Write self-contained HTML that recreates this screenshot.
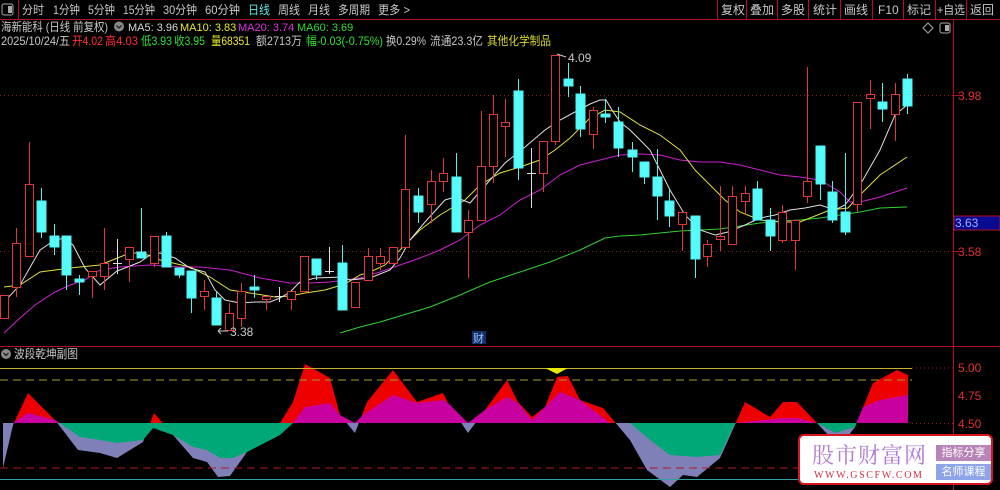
<!DOCTYPE html>
<html><head><meta charset="utf-8"><style>
html,body{margin:0;padding:0;background:#000;}
body{width:1000px;height:490px;overflow:hidden;position:relative;font-family:"Liberation Sans","Noto Sans CJK SC",sans-serif;}
svg{position:absolute;left:0;top:0;}
.wm{position:absolute;left:798px;top:434px;width:195px;height:51px;background:#fff;border:2px solid #d8141e;border-radius:6px;box-sizing:border-box;}
.wm .t{position:absolute;left:12px;top:3px;font-family:"Liberation Serif","Noto Serif CJK SC",serif;font-size:22px;color:#b07ad0;letter-spacing:1px;}
.wm .u{position:absolute;left:14px;top:34px;font-family:"Liberation Serif",serif;font-size:10px;color:#d03040;letter-spacing:1.6px;}
.wm .b{position:absolute;left:136px;width:55px;height:16px;color:#fff;font-size:11px;line-height:16px;text-align:center;font-family:"Liberation Sans","Noto Sans CJK SC",sans-serif;}
</style></head><body>
<svg width="1000" height="490" viewBox="0 0 1000 490" font-family="Liberation Sans, Noto Sans CJK SC, sans-serif" font-size="12">
<line x1="0" y1="19.5" x2="1000" y2="19.5" stroke="#b01020"/>
<line x1="953.5" y1="19" x2="953.5" y2="490" stroke="#b01020"/>
<line x1="0" y1="346.5" x2="1000" y2="346.5" stroke="#b01020"/>
<rect x="2" y="4" width="11" height="11" rx="2" fill="none" stroke="#aaa"/><rect x="8" y="6" width="4" height="7" fill="#aaa"/>
<line x1="18.5" y1="0" x2="18.5" y2="19" stroke="#b01020"/>
<g fill="#c8c8c8">
<text x="22" y="14" textLength="22" lengthAdjust="spacingAndGlyphs">分时</text><text x="53" y="14" textLength="27" lengthAdjust="spacingAndGlyphs">1分钟</text><text x="88" y="14" textLength="27" lengthAdjust="spacingAndGlyphs">5分钟</text><text x="123" y="14" textLength="32" lengthAdjust="spacingAndGlyphs">15分钟</text><text x="163" y="14" textLength="34" lengthAdjust="spacingAndGlyphs">30分钟</text><text x="205" y="14" textLength="35" lengthAdjust="spacingAndGlyphs">60分钟</text>
<text x="248" y="14" fill="#5fe8e8" textLength="22" lengthAdjust="spacingAndGlyphs">日线</text><text x="278" y="14" textLength="22" lengthAdjust="spacingAndGlyphs">周线</text><text x="308" y="14" textLength="22" lengthAdjust="spacingAndGlyphs">月线</text><text x="338" y="14" textLength="32" lengthAdjust="spacingAndGlyphs">多周期</text><text x="378" y="14" textLength="32" lengthAdjust="spacingAndGlyphs">更多 &gt;</text>
</g>
<g stroke="#b01020"><line x1="717.5" y1="0" x2="717.5" y2="19"/><line x1="746.5" y1="0" x2="746.5" y2="19"/><line x1="777.5" y1="0" x2="777.5" y2="19"/><line x1="808.5" y1="0" x2="808.5" y2="19"/><line x1="840.5" y1="0" x2="840.5" y2="19"/><line x1="872.5" y1="0" x2="872.5" y2="19"/><line x1="903.5" y1="0" x2="903.5" y2="19"/><line x1="935.5" y1="0" x2="935.5" y2="19"/><line x1="966.5" y1="0" x2="966.5" y2="19"/></g>
<g fill="#c8c8c8"><text x="721" y="14">复权</text><text x="750" y="14">叠加</text><text x="781" y="14">多股</text><text x="813" y="14">统计</text><text x="844" y="14">画线</text><text x="878" y="14">F10</text><text x="907" y="14">标记</text><text x="937" y="14" textLength="28" lengthAdjust="spacingAndGlyphs">+自选</text><text x="970" y="14">返回</text></g>
<text x="1" y="31" fill="#c8c8c8" textLength="107" lengthAdjust="spacingAndGlyphs">海新能科 (日线 前复权)</text>
<circle cx="119" cy="26.5" r="5" fill="#888"/><path d="M116.5 25.5 L119 28 L121.5 25.5" stroke="#222" fill="none" stroke-width="1.3"/>
<g font-size="11">
<text x="128" y="31" fill="#d8d8d8">MA5: 3.96</text><text x="180" y="31" fill="#e8e830">MA10: 3.83</text><text x="238" y="31" fill="#e030e0">MA20: 3.74</text><text x="297" y="31" fill="#30d830">MA60: 3.69</text>
</g>
<text x="1" y="45" fill="#c8c8c8" textLength="69" lengthAdjust="spacingAndGlyphs">2025/10/24/五</text>
<text x="72" y="45" fill="#ff3030" textLength="31" lengthAdjust="spacingAndGlyphs">开4.02</text>
<text x="105" y="45" fill="#ff3030" textLength="33" lengthAdjust="spacingAndGlyphs">高4.03</text>
<text x="141" y="45" fill="#30e030" textLength="31" lengthAdjust="spacingAndGlyphs">低3.93</text>
<text x="174" y="45" fill="#30e030" textLength="31" lengthAdjust="spacingAndGlyphs">收3.95</text>
<text x="211" y="45" fill="#e8e830" textLength="39" lengthAdjust="spacingAndGlyphs">量68351</text>
<text x="256" y="45" fill="#c8c8c8" textLength="46" lengthAdjust="spacingAndGlyphs">额2713万</text>
<text x="306" y="45" fill="#30e030" textLength="77" lengthAdjust="spacingAndGlyphs">幅-0.03(-0.75%)</text>
<text x="386" y="45" fill="#c8c8c8" textLength="40" lengthAdjust="spacingAndGlyphs">换0.29%</text>
<text x="430" y="45" fill="#c8c8c8" textLength="53" lengthAdjust="spacingAndGlyphs">流通23.3亿</text>
<text x="487" y="45" fill="#d8d830" textLength="64" lengthAdjust="spacingAndGlyphs">其他化学制品</text>
<path d="M928 23 L933 28 L928 33 L923 28 Z" fill="none" stroke="#aaa"/>
<rect x="940" y="23" width="10" height="10" rx="2" fill="none" stroke="#aaa"/><rect x="945" y="25" width="4" height="6" fill="#aaa"/>
<line x1="0" y1="95.5" x2="953" y2="95.5" stroke="#902020" stroke-dasharray="1,3"/>
<line x1="0" y1="251.5" x2="953" y2="251.5" stroke="#902020" stroke-dasharray="1,3"/>
<line x1="953" y1="95.5" x2="962" y2="95.5" stroke="#b01020"/><line x1="953" y1="251.5" x2="962" y2="251.5" stroke="#b01020"/>
<text x="958" y="100" fill="#e03030">3.98</text><text x="958" y="256" fill="#e03030">3.58</text>
<rect x="954" y="216" width="46" height="14" fill="#0a0a90" stroke="#b01020"/><text x="955" y="227" fill="#9ab0ff">3.63</text>
<g fill="none" stroke-width="1">
<polyline stroke="#30d030" points="340,333 360,327 380,322 400,316 430,307 460,295 490,282 520,272 550,262 580,250 605,238 620,236 640,235 660,233 680,231 700,230 720,229 740,226 760,223 780,221 800,220 820,218 840,215 860,212 880,208 907,207"/>
<polyline stroke="#d020d0" points="4,333 20,318 35,305 55,292 70,285 85,280 100,270 120,267 150,265 180,267 200,267 230,270 260,278 290,283 310,283 330,282 345,280 360,278 380,272 400,265 420,258 440,250 460,240 480,225 500,215 520,200 540,190 560,175 580,165 600,160 620,155 640,154 660,155 680,160 700,162 720,162 740,165 760,170 780,175 800,177 820,180 840,192 850,202 860,202 880,197 907,188"/>
<polyline stroke="#e0e040" points="4,287 20,285 40,272 70,268 100,265 125,255 140,252 160,260 190,267 210,277 230,290 250,293 275,297 290,296 305,293 325,290 345,284 360,275 370,272 385,265 400,250 420,230 440,215 465,200 480,185 500,173 520,167 540,160 555,150 570,138 590,118 605,110 620,112 640,125 660,135 680,150 695,170 710,185 725,200 740,212 760,220 780,222 800,222 815,216 830,210 848,208 860,195 880,175 907,157"/>
<polyline stroke="#e0e0e0" points="4,302 20,285 40,250 55,240 65,238 73,245 85,268 100,285 117,271 125,268 140,262 150,255 160,253 175,258 190,268 205,272 215,290 225,300 240,303 255,302 270,302 280,298 290,292 300,282 315,278 342,277 350,280 370,278 390,270 400,258 410,240 425,222 445,200 455,197 470,203 490,180 505,163 525,147 545,130 560,120 575,112 590,104 600,100 606,100 612,110 620,122 630,130 640,140 650,150 660,170 670,190 685,215 700,230 715,235 728,232 745,225 760,218 775,215 790,210 805,208 820,205 835,210 845,205 860,185 880,150 895,115 907,105"/>
</g>
<g stroke-width="1">
<g stroke="#e03838" fill="#000">
<line x1="4.5" y1="295" x2="4.5" y2="318"/><rect x="0.5" y="295.5" width="8" height="23"/>
<line x1="16.5" y1="228" x2="16.5" y2="297"/><rect x="12.5" y="243.5" width="8" height="44"/>
<line x1="29.5" y1="142" x2="29.5" y2="256"/><rect x="25.5" y="184.5" width="8" height="72"/>
<line x1="92.5" y1="271" x2="92.5" y2="298"/><rect x="88.5" y="271.5" width="8" height="5"/>
<line x1="104.5" y1="228" x2="104.5" y2="290"/><rect x="100.5" y="263.5" width="8" height="13"/>
<line x1="129.5" y1="247" x2="129.5" y2="282"/><rect x="125.5" y="247.5" width="8" height="12"/>
<line x1="154.5" y1="236" x2="154.5" y2="267"/><rect x="150.5" y="236.5" width="8" height="27"/>
<line x1="204.5" y1="280" x2="204.5" y2="310"/><rect x="200.5" y="291.5" width="8" height="5"/>
<line x1="229.5" y1="303" x2="229.5" y2="330"/><rect x="225.5" y="313.5" width="8" height="17"/>
<line x1="241.5" y1="283" x2="241.5" y2="327"/><rect x="237.5" y="291.5" width="8" height="27"/>
<line x1="266.5" y1="296" x2="266.5" y2="310"/><rect x="262.5" y="296.5" width="8" height="3"/>
<line x1="291.5" y1="291" x2="291.5" y2="310"/><rect x="287.5" y="291.5" width="8" height="8"/>
<rect x="300.5" y="256.5" width="8" height="35"/>
<rect x="351.5" y="282.5" width="8" height="25"/>
<line x1="368.5" y1="248" x2="368.5" y2="280"/><rect x="364.5" y="256.5" width="8" height="24"/>
<line x1="380.5" y1="248" x2="380.5" y2="270"/><rect x="376.5" y="256.5" width="8" height="7"/>
<rect x="389.5" y="247.5" width="8" height="16"/>
<line x1="405.5" y1="135" x2="405.5" y2="247"/><rect x="401.5" y="189.5" width="8" height="58"/>
<line x1="431.5" y1="170" x2="431.5" y2="223"/><rect x="427.5" y="181.5" width="8" height="23"/>
<line x1="443.5" y1="158" x2="443.5" y2="192"/><rect x="439.5" y="173.5" width="8" height="8"/>
<line x1="468.5" y1="210" x2="468.5" y2="278"/><rect x="464.5" y="220.5" width="8" height="12"/>
<line x1="481.5" y1="111" x2="481.5" y2="220"/><rect x="477.5" y="166.5" width="8" height="54"/>
<line x1="493.5" y1="95" x2="493.5" y2="183"/><rect x="489.5" y="114.5" width="8" height="52"/>
<line x1="505.5" y1="99" x2="505.5" y2="157"/><rect x="501.5" y="122.5" width="8" height="4"/>
<line x1="543.5" y1="141" x2="543.5" y2="192"/><rect x="539.5" y="141.5" width="8" height="32"/>
<line x1="555.5" y1="55" x2="555.5" y2="145"/><rect x="551.5" y="55.5" width="8" height="86"/>
<line x1="593.5" y1="107" x2="593.5" y2="149"/><rect x="589.5" y="110.5" width="8" height="24"/>
<line x1="682.5" y1="212" x2="682.5" y2="251"/><rect x="678.5" y="212.5" width="8" height="12"/>
<line x1="707.5" y1="240" x2="707.5" y2="267"/><rect x="703.5" y="244.5" width="8" height="12"/>
<line x1="720.5" y1="186" x2="720.5" y2="251"/><rect x="716.5" y="236.5" width="8" height="3"/>
<line x1="732.5" y1="186" x2="732.5" y2="244"/><rect x="728.5" y="196.5" width="8" height="48"/>
<line x1="745.5" y1="186" x2="745.5" y2="215"/><rect x="741.5" y="193.5" width="8" height="8"/>
<line x1="782.5" y1="205" x2="782.5" y2="243"/><rect x="778.5" y="212.5" width="8" height="28"/>
<line x1="795.5" y1="220" x2="795.5" y2="270"/><rect x="791.5" y="220.5" width="8" height="20"/>
<line x1="807.5" y1="67" x2="807.5" y2="203"/><rect x="803.5" y="181.5" width="8" height="15"/>
<line x1="857.5" y1="102" x2="857.5" y2="212"/><rect x="853.5" y="102.5" width="8" height="102"/>
<line x1="870.5" y1="80" x2="870.5" y2="129"/><rect x="866.5" y="94.5" width="8" height="4"/>
<line x1="895.5" y1="83" x2="895.5" y2="141"/><rect x="891.5" y="94.5" width="8" height="20"/>
</g>
<g stroke="#54f0f0" fill="#54fcfc">
<line x1="41.5" y1="188" x2="41.5" y2="238"/><rect x="37" y="201" width="9" height="31"/>
<line x1="54.5" y1="224" x2="54.5" y2="255"/><rect x="50" y="236" width="9" height="11"/>
<line x1="66.5" y1="236" x2="66.5" y2="290"/><rect x="62" y="236" width="9" height="39"/>
<line x1="79.5" y1="275" x2="79.5" y2="295"/><rect x="75" y="279" width="9" height="3"/>
<line x1="141.5" y1="208" x2="141.5" y2="258"/><rect x="137" y="252" width="9" height="6"/>
<line x1="166.5" y1="232" x2="166.5" y2="267"/><rect x="162" y="236" width="9" height="31"/>
<line x1="179.5" y1="268" x2="179.5" y2="278"/><rect x="175" y="268" width="9" height="7"/>
<line x1="191.5" y1="271" x2="191.5" y2="313"/><rect x="187" y="271" width="9" height="27"/>
<line x1="216.5" y1="292" x2="216.5" y2="325"/><rect x="212" y="298" width="9" height="27"/>
<line x1="254.5" y1="275" x2="254.5" y2="298"/><rect x="250" y="287" width="9" height="3"/>
<line x1="316.5" y1="259" x2="316.5" y2="280"/><rect x="312" y="259" width="9" height="16"/>
<line x1="342.5" y1="245" x2="342.5" y2="310"/><rect x="338" y="263" width="9" height="47"/>
<line x1="418.5" y1="188" x2="418.5" y2="223"/><rect x="414" y="196" width="9" height="16"/>
<line x1="456.5" y1="153" x2="456.5" y2="232"/><rect x="452" y="177" width="9" height="55"/>
<line x1="518.5" y1="79" x2="518.5" y2="180"/><rect x="514" y="91" width="9" height="77"/>
<line x1="568.5" y1="63" x2="568.5" y2="97"/><rect x="564" y="79" width="9" height="7"/>
<line x1="580.5" y1="86" x2="580.5" y2="137"/><rect x="576" y="94" width="9" height="35"/>
<line x1="605.5" y1="99" x2="605.5" y2="123"/><rect x="601" y="114" width="9" height="3"/>
<line x1="618.5" y1="107" x2="618.5" y2="157"/><rect x="614" y="122" width="9" height="26"/>
<line x1="632.5" y1="142" x2="632.5" y2="172"/><rect x="628" y="150" width="9" height="7"/>
<line x1="644.5" y1="162" x2="644.5" y2="184"/><rect x="640" y="162" width="9" height="15"/>
<line x1="657.5" y1="149" x2="657.5" y2="220"/><rect x="653" y="177" width="9" height="19"/>
<line x1="669.5" y1="189" x2="669.5" y2="227"/><rect x="665" y="201" width="9" height="15"/>
<line x1="695.5" y1="216" x2="695.5" y2="278"/><rect x="691" y="216" width="9" height="43"/>
<line x1="757.5" y1="181" x2="757.5" y2="220"/><rect x="753" y="189" width="9" height="31"/>
<line x1="770.5" y1="208" x2="770.5" y2="251"/><rect x="766" y="220" width="9" height="16"/>
<line x1="820.5" y1="146" x2="820.5" y2="200"/><rect x="816" y="146" width="9" height="38"/>
<line x1="832.5" y1="181" x2="832.5" y2="223"/><rect x="828" y="192" width="9" height="28"/>
<line x1="845.5" y1="153" x2="845.5" y2="235"/><rect x="841" y="212" width="9" height="20"/>
<line x1="882.5" y1="83" x2="882.5" y2="122"/><rect x="878" y="102" width="9" height="7"/>
<line x1="907.5" y1="74" x2="907.5" y2="114"/><rect x="903" y="79" width="9" height="27"/>
</g>
<g stroke="#e0e0e0">
<line x1="117.5" y1="239" x2="117.5" y2="274"/><line x1="113" y1="263.5" x2="122" y2="263.5"/>
<line x1="279.5" y1="287" x2="279.5" y2="302"/><line x1="275" y1="296.5" x2="284" y2="296.5"/>
<line x1="329.5" y1="247" x2="329.5" y2="274"/><line x1="325" y1="271.5" x2="334" y2="271.5"/>
<line x1="531.5" y1="148" x2="531.5" y2="208"/><line x1="527" y1="173.5" x2="536" y2="173.5"/>
</g>
</g>
<text x="568" y="62" fill="#c8c8c8">4.09</text><path d="M557 54 L566 57" stroke="#c8c8c8"/>
<text x="230" y="336" fill="#c8c8c8">3.38</text><path d="M218 331 L228 331 M218 331 L221 328 M218 331 L221 334" stroke="#c8c8c8" fill="none"/>
<rect x="472" y="331" width="14" height="13" fill="#10306a"/><text x="473" y="342" fill="#a0c0ff" font-size="11">财</text>
<circle cx="6" cy="354" r="5" fill="#888"/><path d="M3.5 353 L6 355.5 L8.5 353" stroke="#222" fill="none" stroke-width="1.3"/>
<text x="14" y="358" fill="#c8c8c8" textLength="64" lengthAdjust="spacingAndGlyphs">波段乾坤副图</text>
<defs>
<clipPath id="up"><rect x="0" y="346" width="953" height="77"/></clipPath>
<clipPath id="dn"><rect x="0" y="423" width="953" height="67"/></clipPath>
</defs>
<g clip-path="url(#up)"><path fill="#ee0000" d="M3,423 L3,468 13,425 28,393 55,420 78,450 100,453 117,458 143,442 154,413 173,435 193,458 207,462 218,477 230,476 247,452 257,440 267,437 280,423 293,402 305,364 330,378 340,415 355,433 367,402 393,370 417,402 443,393 448,403 468,433 485,410 507,380 518,402 532,417 545,407 557,377 568,376 580,400 603,408 630,440 647,470 670,487 683,475 697,477 720,458 725,447 745,402 770,417 783,402 797,402 817,423 830,437 845,440 855,427 873,383 897,370 908,375 908,423 Z"/></g>
<g clip-path="url(#dn)"><path fill="#8080b8" d="M3,423 L3,468 13,425 28,393 55,420 78,450 100,453 117,458 143,442 154,413 173,435 193,458 207,462 218,477 230,476 247,452 257,440 267,437 280,423 293,402 305,364 330,378 340,415 355,433 367,402 393,370 417,402 443,393 448,403 468,433 485,410 507,380 518,402 532,417 545,407 557,377 568,376 580,400 603,408 630,440 647,470 670,487 683,475 697,477 720,458 725,447 745,402 770,417 783,402 797,402 817,423 830,437 845,440 855,427 873,383 897,370 908,375 908,423 Z"/></g>
<g clip-path="url(#up)"><path fill="#c800a0" d="M3,423 L13,423 28,413 55,420 80,437 100,440 117,443 143,440 153,428 173,435 193,447 207,450 220,458 233,458 247,452 280,435 293,423 305,407 330,403 340,415 355,423 363,415 393,395 417,403 443,400 448,403 468,423 485,410 507,397 518,403 532,420 545,407 560,392 580,400 610,423 630,423 650,440 670,455 697,457 720,455 727,440 735,423 783,418 797,418 817,423 835,433 855,427 863,407 880,400 908,395 908,423 Z"/></g>
<g clip-path="url(#dn)"><path fill="#00a878" d="M3,423 L13,423 28,413 55,420 80,437 100,440 117,443 143,440 153,428 173,435 193,447 207,450 220,458 233,458 247,452 280,435 293,423 305,407 330,403 340,415 355,423 363,415 393,395 417,403 443,400 448,403 468,423 485,410 507,397 518,403 532,420 545,407 560,392 580,400 610,423 630,423 650,440 670,455 697,457 720,455 727,440 735,423 783,418 797,418 817,423 835,433 855,427 863,407 880,400 908,395 908,423 Z"/></g>
<line x1="0" y1="368.5" x2="912" y2="368.5" stroke="#c8b030"/>
<line x1="0" y1="380" x2="912" y2="380" stroke="#a0a030" stroke-dasharray="8,5"/>
<line x1="0" y1="468" x2="912" y2="468" stroke="#b01828" stroke-dasharray="8,5"/>
<line x1="0" y1="479.5" x2="912" y2="479.5" stroke="#30a0a0"/>
<path d="M545 368 L568 368 L557 374 Z" fill="#e8e800"/>
<g stroke="#902020" stroke-dasharray="1,3"><line x1="912" y1="368" x2="953" y2="368"/><line x1="912" y1="423.5" x2="953" y2="423.5"/></g>
<text x="958" y="372" fill="#e03030">5.00</text><text x="958" y="400" fill="#e03030">4.75</text><text x="958" y="428" fill="#e03030">4.50</text>
</svg>
<div class="wm">
<div class="t">股市财富网</div>
<div class="u">WWW.GSCFW.COM</div>
<div class="b" style="top:9px;background:#b884b8;">指标分享</div>
<div class="b" style="top:28px;background:#8ea4e8;">名师课程</div>
</div>
</body></html>
